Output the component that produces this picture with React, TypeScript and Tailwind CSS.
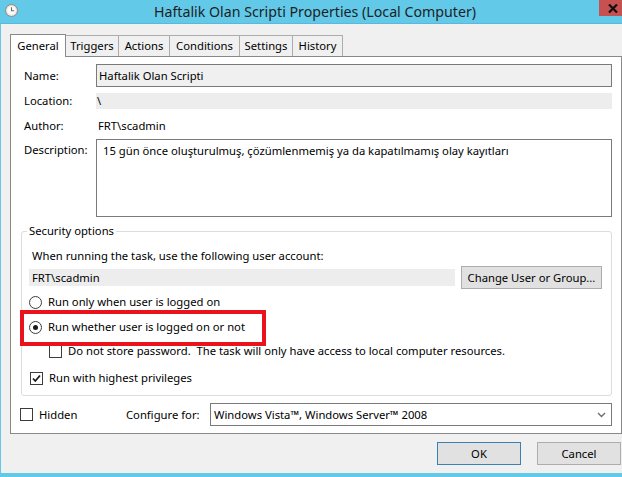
import React from "react";

function Radio({ checked }: { checked?: boolean }) {
  return (
    <span className="w-[13px] h-[13px] rounded-full border border-[#3c3c3c] bg-white flex items-center justify-center shrink-0">
      {checked && <span className="w-[5px] h-[5px] rounded-full bg-[#1a1a1a]" />}
    </span>
  );
}

function Check({ checked }: { checked?: boolean }) {
  return (
    <span className="w-[13px] h-[13px] border border-[#3c3c3c] bg-white flex items-center justify-center shrink-0">
      {checked && (
        <svg width="11" height="11" viewBox="0 0 11 11">
          <path d="M2 5.5 L4.3 8 L9 2.5" fill="none" stroke="#1a1a1a" strokeWidth="1.8" />
        </svg>
      )}
    </span>
  );
}

export default function App() {
  const tabs = [
    { n: "General", w: "w-[56px]" },
    { n: "Triggers", w: "w-[54px]" },
    { n: "Actions", w: "w-[52px]" },
    { n: "Conditions", w: "w-[71px]" },
    { n: "Settings", w: "w-[54px]" },
    { n: "History", w: "w-[51px]" },
  ];
  return (
    <div className="relative w-[622px] h-[477px] bg-[#62c9e9] flex flex-col overflow-hidden font-['Noto_Sans',sans-serif] text-[11.25px] text-black leading-[16px]">
      {/* title bar */}
      <div className="relative h-[24px] shrink-0 flex items-center justify-center border-b border-[#5ab9d7]">
        <svg className="absolute left-[5px] top-[4px]" width="13" height="13" viewBox="0 0 13 13">
          <circle cx="6.5" cy="6.5" r="6" fill="#e9e4d8" stroke="#8a8a8a" strokeWidth="1" />
          <circle cx="6.5" cy="6.5" r="4.3" fill="#fbfbfb" />
          <path d="M6.5 3.2 V6.7 H9.2" fill="none" stroke="#6a6a6a" strokeWidth="1.1" />
        </svg>
        <span className="text-[14.2px] leading-[20px] text-[#1e1e1e] ml-[8px]">
          Haftalik Olan Scripti Properties (Local Computer)
        </span>
        <div className="absolute right-0 top-0 w-[23px] h-[16px] bg-[#c75050] flex items-center justify-end pr-[4px]">
          <svg width="10" height="9" viewBox="0 0 10 9">
            <path d="M1 0.5 L9 8.5 M9 0.5 L1 8.5" stroke="#111" strokeWidth="2.2" />
          </svg>
        </div>
      </div>

      {/* client area */}
      <div className="flex-1 ml-px mb-[4px] bg-[#f0f0f0] flex flex-col">
        {/* tabs */}
        <div className="flex items-end pl-[9px] mt-[10px] h-[22px]">
          {tabs.map((t, i) =>
            i === 0 ? (
              <div
                key={t.n}
                className={`${t.w} h-[23px] -mb-px relative z-10 bg-white border border-b-0 border-[#898989] flex items-center justify-center pb-[1px]`}
              >
                {t.n}
              </div>
            ) : (
              <div
                key={t.n}
                className={`${t.w} h-[21px] -ml-px border border-b-0 border-[#acacac] bg-[#f0f0f0] flex items-center justify-center`}
              >
                {t.n}
              </div>
            )
          )}
        </div>

        {/* panel */}
        <div className="ml-[9px] h-[378px] bg-white border border-[#898989] flex flex-col">
          {/* Name */}
          <div className="flex items-center mt-[7px] pl-[13px] h-[23px]">
            <span className="w-[72px]">Name:</span>
            <div className="w-[516px] h-[23px] bg-[#f0f0f0] border border-[#7a7a7a] flex items-center pl-[2px]">
              Haftalik Olan Scripti
            </div>
          </div>
          {/* Location */}
          <div className="flex items-center mt-[6px] pl-[13px] h-[16px]">
            <span className="w-[72px]">Location:</span>
            <div className="w-[516px] h-[16px] bg-[#ededed] flex items-center pl-[1px]">\</div>
          </div>
          {/* Author */}
          <div className="flex items-center mt-[9px] pl-[13px] h-[16px]">
            <span className="w-[72px]">Author:</span>
            <span className="ml-[2px]">FRT\scadmin</span>
          </div>
          {/* Description */}
          <div className="flex items-start mt-[5px] pl-[13px]">
            <span className="w-[72px] mt-[3px]">Description:</span>
            <div className="w-[516px] h-[78px] bg-white border border-[#7a7a7a] pl-[6px] pt-[3px]">
              15 gün önce oluşturulmuş, çözümlenmemiş ya da kapatılmamış olay kayıtları
            </div>
          </div>

          {/* Security options */}
          <fieldset className="ml-[10px] mt-[6px] w-[591px] border border-[#dcdcdc] rounded-[3px] pl-[7px] pt-[9px] pb-[9px]">
            <legend className="-ml-[2px] px-[2px]">Security options</legend>
            <div className="ml-[3px] h-[16px] flex items-center">
              When running the task, use the following user account:
            </div>
            <div className="flex items-center mt-[2px] h-[23px]">
              <div className="w-[426px] h-[17px] bg-[#ededed] flex items-center pl-[3px]">FRT\scadmin</div>
              <div className="ml-[6px] w-[141px] h-[23px] bg-[#e1e1e1] border border-[#adadad] flex items-center justify-center">
                Change User or Group...
              </div>
            </div>
            <div className="flex items-center mt-[5px] h-[16px] gap-[6px]">
              <Radio />
              <span>Run only when user is logged on</span>
            </div>
            <div className="flex items-center mt-[9px] h-[16px] gap-[6px]">
              <Radio checked />
              <span>Run whether user is logged on or not</span>
            </div>
            <div className="flex items-center mt-[8px] h-[16px] gap-[6px] ml-[20px]">
              <Check />
              <span>Do not store password.&nbsp; The task will only have access to local computer resources.</span>
            </div>
            <div className="flex items-center mt-[11px] h-[16px] gap-[6px] ml-[1px]">
              <Check checked />
              <span>Run with highest privileges</span>
            </div>
          </fieldset>

          {/* Hidden / Configure */}
          <div className="flex items-center mt-[7px] h-[23px] pl-[9px]">
            <div className="w-[106px] flex items-center gap-[6px]">
              <Check />
              <span>Hidden</span>
            </div>
            <span className="w-[84px]">Configure for:</span>
            <div className="w-[402px] h-[23px] bg-white border border-[#7a7a7a] flex items-center pl-[3px] pr-[5px] justify-between">
              <span>Windows Vista™, Windows Server™ 2008</span>
              <svg width="9" height="6" viewBox="0 0 9 6">
                <path d="M1 1 L4.5 4.5 L8 1" fill="none" stroke="#6d6d6d" strokeWidth="1.4" />
              </svg>
            </div>
          </div>
        </div>

        {/* buttons */}
        <div className="flex justify-end gap-[16px] mt-[8px] pr-[1px]">
          <div className="w-[84px] h-[23px] bg-[#e1e1e1] border border-[#3c7fb1] flex items-center justify-center">OK</div>
          <div className="w-[84px] h-[23px] bg-[#e1e1e1] border border-[#adadad] flex items-center justify-center">Cancel</div>
        </div>
      </div>

      {/* red annotation box */}
      <div className="absolute left-[20px] top-[310px] w-[246px] h-[36px] border-[4px] border-[#e8131b]" />
    </div>
  );
}
